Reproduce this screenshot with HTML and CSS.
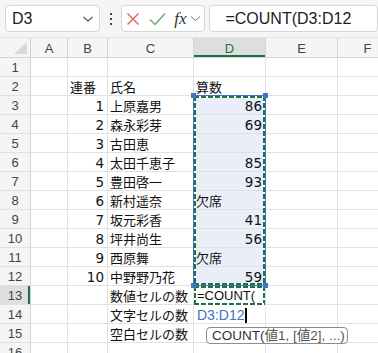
FILE: index.html
```html
<!DOCTYPE html>
<html lang="ja">

<head>
    <meta charset="UTF-8">
    <meta name="viewport" content="width=device-width, initial-scale=1.0">
    <title>COUNT関数</title>
    <link rel="stylesheet" href="styles.css">
</head>

<body>
    <div class="barra">
        <div class="nombre">
            <span>D3</span>
            <svg width="12" height="8" viewBox="0 0 12 8"><path d="M1.5 2 L6 6 L10.5 2" fill="none" stroke="#555" stroke-width="1.2"/></svg>
        </div>
        <div class="puntos">
            <svg width="4" height="12" viewBox="0 0 4 12"><rect x="1" y="0" width="2" height="2" fill="#444"/><rect x="1" y="5" width="2" height="2" fill="#444"/><rect x="1" y="10" width="2" height="2" fill="#444"/></svg>
        </div>
        <div class="botones">
            <svg width="14" height="14" viewBox="0 0 14 14"><path d="M1.5 1.5 L12.5 12.5 M12.5 1.5 L1.5 12.5" stroke="#e0605a" stroke-width="1.4"/></svg>
            <svg width="17" height="14" viewBox="0 0 17 14"><path d="M1 7.5 L6 12.5 L16 1.5" fill="none" stroke="#6aa86a" stroke-width="1.4"/></svg>
            <span class="fx">fx</span>
            <svg width="11" height="7" viewBox="0 0 11 7"><path d="M1 1.5 L5.5 5.5 L10 1.5" fill="none" stroke="#777" stroke-width="1"/></svg>
        </div>
        <div class="formula">=COUNT(D3:D12</div>
    </div>

    <div class="hoja">
        <div class="h esquina"><svg width="13" height="12" viewBox="0 0 13 12"><path d="M13 0 L13 12 L0 12 Z" fill="#d9d9d9"/></svg></div>
        <div class="h">A</div><div class="h">B</div><div class="h">C</div><div class="h activo">D</div><div class="h">E</div><div class="h">F</div>

        <div class="rh">1</div><div class="c"></div><div class="c"></div><div class="c"></div><div class="c"></div><div class="c"></div><div class="c"></div>
        <div class="rh">2</div><div class="c"></div><div class="c">連番</div><div class="c">氏名</div><div class="c">算数</div><div class="c"></div><div class="c"></div>
        <div class="rh">3</div><div class="c"></div><div class="c n">1</div><div class="c">上原嘉男</div><div class="c n sel">86</div><div class="c"></div><div class="c"></div>
        <div class="rh">4</div><div class="c"></div><div class="c n">2</div><div class="c">森永彩芽</div><div class="c n sel">69</div><div class="c"></div><div class="c"></div>
        <div class="rh">5</div><div class="c"></div><div class="c n">3</div><div class="c">古田恵</div><div class="c sel"></div><div class="c"></div><div class="c"></div>
        <div class="rh">6</div><div class="c"></div><div class="c n">4</div><div class="c">太田千恵子</div><div class="c n sel">85</div><div class="c"></div><div class="c"></div>
        <div class="rh">7</div><div class="c"></div><div class="c n">5</div><div class="c">豊田啓一</div><div class="c n sel">93</div><div class="c"></div><div class="c"></div>
        <div class="rh">8</div><div class="c"></div><div class="c n">6</div><div class="c">新村遥奈</div><div class="c sel">欠席</div><div class="c"></div><div class="c"></div>
        <div class="rh">9</div><div class="c"></div><div class="c n">7</div><div class="c">坂元彩香</div><div class="c n sel">41</div><div class="c"></div><div class="c"></div>
        <div class="rh">10</div><div class="c"></div><div class="c n">8</div><div class="c">坪井尚生</div><div class="c n sel">56</div><div class="c"></div><div class="c"></div>
        <div class="rh">11</div><div class="c"></div><div class="c n">9</div><div class="c">西原舞</div><div class="c sel">欠席</div><div class="c"></div><div class="c"></div>
        <div class="rh">12</div><div class="c"></div><div class="c n">10</div><div class="c">中野野乃花</div><div class="c n sel">59</div><div class="c"></div><div class="c"></div>
        <div class="rh activo-fila">13</div><div class="c"></div><div class="c"></div><div class="c">数値セルの数</div><div class="c edit">=COUNT(</div><div class="c"></div><div class="c"></div>
        <div class="rh">14</div><div class="c"></div><div class="c"></div><div class="c">文字セルの数</div><div class="c edit ref">D3:D12<span class="cursor"></span></div><div class="c"></div><div class="c"></div>
        <div class="rh">15</div><div class="c"></div><div class="c"></div><div class="c">空白セルの数</div><div class="c"></div><div class="c"></div><div class="c"></div>
        <div class="rh">16</div><div class="c"></div><div class="c"></div><div class="c"></div><div class="c"></div><div class="c"></div><div class="c"></div>

        <!-- rango referenciado y celda en edicion -->
        <div class="rango"><div class="hormigas"></div></div>
        <div class="hormigas celda13"></div>
        <div class="asa" style="left: 191px; top: 55px;"></div>
        <div class="asa" style="left: 263px; top: 55px;"></div>
        <div class="asa" style="left: 191px; top: 245px;"></div>
        <div class="asa" style="left: 263px; top: 245px;"></div>

        <div class="ayuda">COUNT(<span>値1, [値2], ...)</span></div>
    </div>
</body>

</html>
```

FILE: styles.css
```css
* {
    box-sizing: border-box;
    margin: 0;
    padding: 0;
}

body {
    width: 378px;
    height: 353px;
    overflow: hidden;
    background-color: #fff;
    font-family: "Noto Sans CJK JP", sans-serif;
    color: #111;
}

/* barra de formulas */
.barra {
    height: 38px;
    background-color: #f5f5f5;
    border-bottom: 1px solid #e4e4e4;
    display: flex;
    align-items: flex-start;
    padding: 5px 0 0 5px;
    white-space: nowrap;
}

.nombre,
.botones,
.formula {
    height: 27px;
    background-color: #fff;
    border: 1px solid #d6d6d6;
    border-radius: 4px;
    display: flex;
    align-items: center;
}

.nombre {
    width: 101px;
    padding: 0 5px 0 6px;
    justify-content: space-between;
    font-family: "Liberation Sans", sans-serif;
    font-size: 16px;
    color: #222;
}

.puntos {
    width: 23px;
    height: 27px;
    display: flex;
    align-items: center;
    justify-content: center;
}

.botones {
    width: 86px;
    padding: 0 3px 0 4px;
    gap: 9px;
}

.fx {
    font-family: "Liberation Serif", serif;
    font-style: italic;
    font-size: 17px;
    color: #333;
    margin-left: -1px;
    margin-right: -5px;
}

.formula {
    width: 180px;
    margin-left: 4px;
    padding-left: 15px;
    font-family: "Liberation Sans", sans-serif;
    font-size: 16px;
    color: #1c1c1c;
}

/* hoja */
.hoja {
    position: relative;
    display: grid;
    grid-template-columns: 31px 37px 40px 86px 72px 72px 60px;
    grid-template-rows: 20px;
    grid-auto-rows: 19px;
}

.h,
.rh {
    background-color: #f5f5f5;
    border-right: 1px solid #d4d4d4;
    border-bottom: 1px solid #d4d4d4;
    font-family: "Liberation Sans", sans-serif;
    font-size: 13px;
    color: #444;
    text-align: center;
    line-height: 21px;
}

.esquina {
    display: flex;
    align-items: flex-end;
    justify-content: flex-end;
    padding: 0 3px 3px 0;
}

.rh {
    border-bottom-color: #e1e1e1;
    line-height: 20px;
}

.activo {
    background-color: #dedede;
    color: #1e7145;
    box-shadow: inset 0 -2px #1e7145;
}

.activo-fila {
    background-color: #dedede;
    box-shadow: inset -2px 0 #1e7145;
}

.c {
    border-right: 1px solid #e1e1e1;
    border-bottom: 1px solid #e1e1e1;
    font-size: 13px;
    line-height: 18px;
    padding: 1px 3px 0 2px;
    white-space: nowrap;
}

.n {
    text-align: right;
    font-family: "DejaVu Sans", sans-serif;
    font-size: 13.5px;
}

.sel {
    background-color: #e9eef8;
}

.edit {
    font-family: "Liberation Sans", sans-serif;
    font-size: 13px;
    color: #111;
    padding-left: 3px;
}

.ref {
    font-size: 14px;
    color: #4472c4;
}

.cursor {
    display: inline-block;
    width: 2px;
    height: 15px;
    background-color: #000;
    vertical-align: -3px;
    margin-left: 1px;
}

/* marcas sobre la hoja */
.rango {
    position: absolute;
    left: 193px;
    top: 57px;
    width: 73px;
    height: 191px;
    border: 1px solid #4472c4;
}

.hormigas {
    position: absolute;
    inset: 0;
    background:
        repeating-linear-gradient(90deg, #1e7145 0 5px, #fff 5px 7px) top / 100% 2px no-repeat,
        repeating-linear-gradient(90deg, #1e7145 0 5px, #fff 5px 7px) bottom / 100% 2px no-repeat,
        repeating-linear-gradient(180deg, #1e7145 0 5px, #fff 5px 7px) left / 2px 100% no-repeat,
        repeating-linear-gradient(180deg, #1e7145 0 5px, #fff 5px 7px) right / 2px 100% no-repeat;
}

.celda13 {
    inset: auto;
    left: 194px;
    top: 248px;
    width: 71px;
    height: 19px;
}

.asa {
    position: absolute;
    width: 5px;
    height: 5px;
    background-color: #4472c4;
}

.ayuda {
    position: absolute;
    left: 206px;
    top: 289px;
    width: 142px;
    height: 17px;
    background-color: #fff;
    border: 1px solid #8c8c8c;
    border-radius: 4px;
    font-family: "Liberation Sans", "Noto Sans CJK JP", sans-serif;
    font-size: 13.5px;
    line-height: 15px;
    padding-left: 5px;
    color: #333;
    white-space: nowrap;
}

.ayuda span {
    color: #555;
}
```
